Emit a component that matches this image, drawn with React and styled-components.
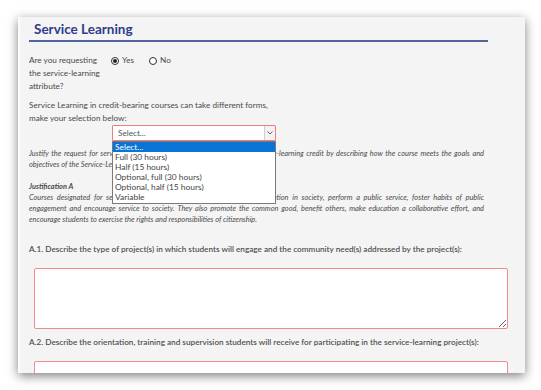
import React from 'react';
import styled, { createGlobalStyle } from 'styled-components';

const GlobalStyle = createGlobalStyle`
  body {
    margin: 0;
    background: #ffffff;
    font-family: Lato, "Open Sans", sans-serif;
  }
`;

const Page = styled.div`
  width: 541px;
  height: 390px;
  padding: 17px 16px 0 18px;
  box-sizing: border-box;
  overflow: hidden;
`;

const Panel = styled.div`
  height: 356px;
  background: #f4f4f4;
  border-left: 2px solid #fbfbfb;
  box-shadow: 0 3px 10px rgba(0, 0, 0, 0.5);
  padding: 4px 17px 0 9px;
  box-sizing: border-box;
  overflow: hidden;
  color: #4a4a4a;
  font-size: 8.2px;
`;

const Heading = styled.h2`
  margin: 0 20px 0 0;
  padding: 0 0 2px 5px;
  font-size: 13.5px;
  font-weight: 700;
  color: #2f3b8c;
  border-bottom: 2px solid #56639e;
  line-height: 17px;
`;

const QuestionRow = styled.div`
  display: flex;
  align-items: flex-start;
  margin-top: 12px;
  line-height: 13px;
`;

const QuestionLabel = styled.div`
  width: 74px;
  padding-right: 8px;
`;

const RadioGroup = styled.div`
  display: flex;
  gap: 15px;
`;

const RadioOption = styled.label`
  display: flex;
  align-items: center;
  gap: 3px;
`;

const RadioDot = styled.span`
  width: 6px;
  height: 6px;
  border-radius: 50%;
  border: 1px solid #333;
  background: #fff;
  display: inline-flex;
  align-items: center;
  justify-content: center;
  &::after {
    content: '';
    width: 4px;
    height: 4px;
    border-radius: 50%;
    background: ${p => (p.$checked ? '#222' : 'transparent')};
  }
`;

const Para = styled.p`
  margin: 6px 0 0;
  line-height: 13px;
`;

const SelectWrap = styled.div`
  position: relative;
  margin: 0 0 0 83px;
  width: 164px;
  z-index: 2;
`;

const SelectBox = styled.div`
  height: 16px;
  box-sizing: border-box;
  border: 1px solid #ef7d7d;
  background: #fff;
  display: flex;
  align-items: center;
  padding-left: 5px;
  color: #555;
  border-radius: 1px;
`;

const Caret = styled.span`
  margin-left: auto;
  width: 10px;
  height: 14px;
  border-left: 1px solid #cfcfcf;
  background: #f2f2f2;
  display: flex;
  align-items: center;
  justify-content: center;
`;

const OptionList = styled.ul`
  position: absolute;
  top: 16px;
  left: 0;
  width: 164px;
  box-sizing: border-box;
  margin: 0;
  padding: 0 0 1px;
  list-style: none;
  background: #fff;
  border: 1px solid #7a7a7a;
  color: #444;
  font-size: 8.4px;
`;

const OptionItem = styled.li`
  height: 10px;
  line-height: 10px;
  padding-left: 2px;
  background: ${p => (p.$active ? '#0a74d6' : 'transparent')};
  color: ${p => (p.$active ? '#fff' : '#444')};
`;

const Note = styled.p`
  margin: ${p => p.$top || 6}px 0 0;
  width: 455px;
  font-style: italic;
  font-size: 7.4px;
  line-height: 11px;
  text-align: justify;
  color: #4a4a4a;
`;

const NoteTitle = styled.span`
  display: block;
  font-weight: 700;
`;

const Prompt = styled.p`
  margin: ${p => p.$top}px 0 0;
  font-weight: 600;
  line-height: 12px;
  color: #505050;
`;

const AnswerBox = styled.textarea`
  display: block;
  margin: 13px 0 0 5px;
  width: calc(100% - 5px);
  height: 61px;
  box-sizing: border-box;
  border: 1.5px solid #f28b8b;
  border-radius: 2px;
  background: #fff;
  resize: vertical;
  font-family: inherit;
`;

const options = [
  'Select...',
  'Full (30 hours)',
  'Half (15 hours)',
  'Optional, full (30 hours)',
  'Optional, half (15 hours)',
  'Variable',
];

export default function App() {
  return (
    <>
      <GlobalStyle />
      <Page>
        <Panel>
          <Heading>Service Learning</Heading>
          <QuestionRow>
            <QuestionLabel>Are you requesting the service-learning attribute?</QuestionLabel>
            <RadioGroup>
              <RadioOption>
                <RadioDot $checked />Yes
              </RadioOption>
              <RadioOption>
                <RadioDot />No
              </RadioOption>
            </RadioGroup>
          </QuestionRow>
          <Para>
            Service Learning in credit-bearing courses can take different forms,
            <br />
            make your selection below:
          </Para>
          <SelectWrap>
            <SelectBox>
              Select...
              <Caret>
                <svg width="6" height="4" viewBox="0 0 6 4">
                  <path d="M0.5 0.5 L3 3 L5.5 0.5" fill="none" stroke="#555" strokeWidth="0.9" />
                </svg>
              </Caret>
            </SelectBox>
            <OptionList>
              {options.map((o, i) => (
                <OptionItem key={o} $active={i === 0}>{o}</OptionItem>
              ))}
            </OptionList>
          </SelectWrap>
          <Note $top={7}>
            Justify the request for service-learning designation and the awarding of service-learning credit by describing how the course meets the goals
            and objectives of the Service-Learning program.
          </Note>
          <Note $top={11}>
            <NoteTitle>Justification A</NoteTitle>
            Courses designated for service-learning prepare students for active participation in society, perform a public service, foster habits of public
            engagement and encourage service to society. They also promote the common good, benefit others, make education a collaborative effort, and
            encourage students to exercise the rights and responsibilities of citizenship.
          </Note>
          <Prompt $top={18}>
            A.1. Describe the type of project(s) in which students will engage and the community need(s) addressed by the project(s):
          </Prompt>
          <AnswerBox />
          <Prompt $top={7}>
            A.2. Describe the orientation, training and supervision students will receive for participating in the service-learning project(s):
          </Prompt>
          <AnswerBox />
        </Panel>
      </Page>
    </>
  );
}
